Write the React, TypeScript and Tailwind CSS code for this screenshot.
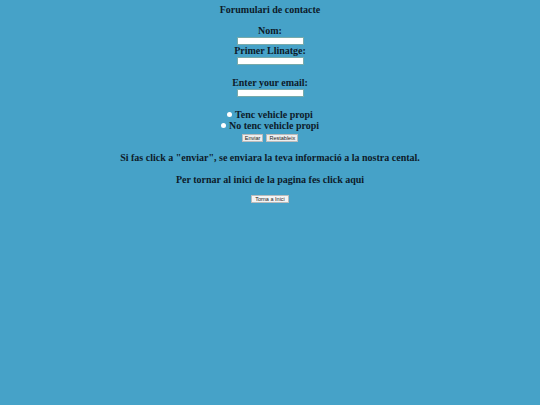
export default function App() {
  const serif = { fontFamily: '"Liberation Serif", "Times New Roman", serif' };
  const sans = { fontFamily: '"Liberation Sans", Arial, sans-serif' };

  return (
    <div
      className="w-[540px] h-[405px] bg-[#46a2c8] text-[#0d1b2a] text-center font-bold text-[10px] leading-[11px]"
      style={serif}
    >
      {/* Title */}
      <div className="pt-[4px]">Forumulari de contacte</div>

      <form className="flex flex-col items-center">
        <div className="mt-[10px]">Nom:</div>
        <div className="w-[67px] h-[8px] bg-white border border-[#7aa] mt-[1px]" />
        <div className="mt-0">Primer Llinatge:</div>
        <div className="w-[67px] h-[8px] bg-white border border-[#7aa] mt-[1px]" />

        <div className="mt-[12px]">Enter your email:</div>
        <div className="w-[67px] h-[8px] bg-white border border-[#7aa] mt-[1px]" />

        {/* Radios */}
        <div className="mt-[12px] flex items-center gap-[3px]">
          <span className="w-[5px] h-[5px] rounded-full bg-white" />
          <span>Tenc vehicle propi</span>
        </div>
        <div className="flex items-center gap-[3px]">
          <span className="w-[5px] h-[5px] rounded-full bg-white" />
          <span>No tenc vehicle propi</span>
        </div>

        {/* Buttons */}
        <div className="mt-[3px] flex gap-[3px]">
          <span
            className="h-[8px] px-[2px] bg-[#eeeeee] border border-[#bbb] text-[5.5px] leading-[6px] font-normal text-[#222]"
            style={sans}
          >
            Enviar
          </span>
          <span
            className="h-[8px] px-[2px] bg-[#eeeeee] border border-[#bbb] text-[5.5px] leading-[6px] font-normal text-[#222]"
            style={sans}
          >
            Restableix
          </span>
        </div>
      </form>

      <p className="mt-[10px]">
        Si fas click a "enviar", se enviara la teva informació a la nostra cental.
      </p>
      <p className="mt-[11px]">Per tornar al inici de la pagina fes click aqui</p>

      <div className="mt-[10px] flex justify-center">
        <span
          className="h-[8px] px-[3px] bg-[#f4f4f4] border border-[#bbb] text-[5.5px] leading-[6px] font-normal text-[#222]"
          style={sans}
        >
          Torna a Inici
        </span>
      </div>
    </div>
  );
}
